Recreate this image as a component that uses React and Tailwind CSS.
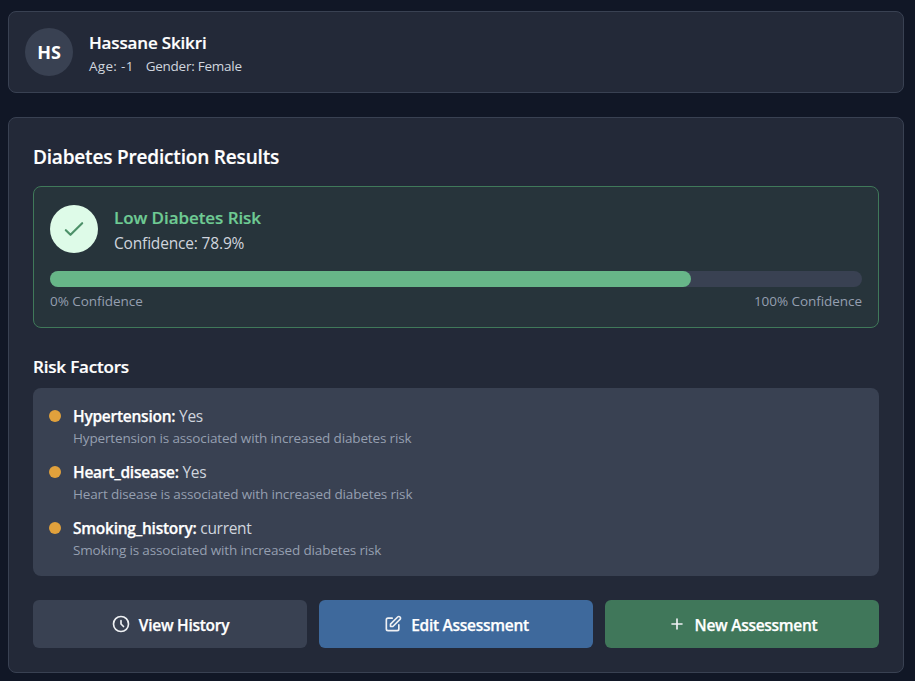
const FACTORS = [
  { name: 'Hypertension', value: 'Yes', note: 'Hypertension is associated with increased diabetes risk' },
  { name: 'Heart_disease', value: 'Yes', note: 'Heart disease is associated with increased diabetes risk' },
  { name: 'Smoking_history', value: 'current', note: 'Smoking is associated with increased diabetes risk' },
];

function Icon({ d, className, strokeWidth = 2 }) {
  return (
    <svg className={className} viewBox="0 0 24 24" fill="none" stroke="currentColor" strokeWidth={strokeWidth} strokeLinecap="round" strokeLinejoin="round">
      <path d={d} />
    </svg>
  );
}

function Action({ color, d, children }) {
  return (
    <button className={`flex h-12 flex-1 items-center justify-center gap-2 rounded-md text-[15.5px] font-semibold tracking-[-0.28px] text-white ${color}`}>
      <Icon className="size-5 text-[#eef0f3]" d={d} />
      <span className="pt-0.5 leading-[23px] whitespace-nowrap [-webkit-text-stroke:0.25px]">{children}</span>
    </button>
  );
}

export default function App() {
  return (
    <div className="h-[681px] overflow-hidden bg-[#111726] pt-[11px] pl-2 font-['Open_Sans','Noto_Sans',sans-serif] text-white">
      <div className="flex w-[896px] flex-col gap-6">
        <header className="flex items-center gap-4 rounded-lg border border-[#394152] bg-[#232938] p-4">
          <div className="flex size-12 items-center justify-center rounded-full bg-[#394152] text-lg font-bold">HS</div>
          <div>
            <h1 className="pt-0.5 text-[17px] leading-[26px] font-semibold tracking-[-0.16px] [-webkit-text-stroke:0.2px]">Hassane Skikri</h1>
            <p className="flex gap-3 pt-px text-[13.5px] leading-[19px] text-[#d0d5de]">
              <span className="tracking-[0.3px]">Age: -1</span>
              <span className="tracking-[-0.25px]">Gender: Female</span>
            </p>
          </div>
        </header>

        <main className="rounded-lg border border-[#394152] bg-[#232938] p-6">
          <h2 className="mb-4 pt-0.5 text-[19px] leading-[26px] font-semibold tracking-[-0.18px] [-webkit-text-stroke:0.2px]">Diabetes Prediction Results</h2>

          <section className="mb-6 rounded-lg border border-[#40795a] bg-[#27343b] p-4">
            <div className="mb-4 flex items-center gap-4">
              <div className="flex size-12 items-center justify-center rounded-full bg-[#defbe8] text-[#4d9169]">
                <Icon className="size-7" strokeWidth={1.85} d="M5 13l4 4L19 7" />
              </div>
              <div>
                <h3 className="pt-0.5 text-[17px] leading-[26px] font-semibold tracking-[-0.07px] text-[#6fcb94] [-webkit-text-stroke:0.2px]">Low Diabetes Risk</h3>
                <p className="pt-px text-[15.5px] leading-[23px] tracking-[-0.17px] text-[#d0d5de]">Confidence: 78.9%</p>
              </div>
            </div>
            <div className="h-4 rounded-full bg-[#394152]">
              <div className="h-4 w-[78.9%] rounded-full bg-[#67b688]" />
            </div>
            <div className="mt-1 flex justify-between pt-px text-[13.5px] leading-[19px] tracking-[-0.05px] text-[#959fb0]">
              <span>0% Confidence</span>
              <span>100% Confidence</span>
            </div>
          </section>

          <h3 className="mb-2 pt-0.5 text-[17px] leading-[26px] font-semibold tracking-[-0.18px] [-webkit-text-stroke:0.2px]">Risk Factors</h3>
          <ul className="mb-6 flex flex-col gap-3 rounded-lg bg-[#394152] p-4">
            {FACTORS.map((f) => (
              <li key={f.name} className="flex gap-3">
                <span className="mt-1.5 size-3 shrink-0 rounded-full bg-[#e1a13c]" />
                <div>
                  <p className="pt-px text-[15.5px] leading-[23px] tracking-[-0.3px] text-[#d0d5de]">
                    <span className="font-semibold tracking-[-0.25px] text-white [-webkit-text-stroke:0.25px]">{f.name}:</span> {f.value}
                  </p>
                  <p className="pt-px text-[13.5px] leading-[19px] tracking-[-0.15px] text-[#959fb0]">{f.note}</p>
                </div>
              </li>
            ))}
          </ul>

          <div className="flex gap-3">
            <Action color="bg-[#394152]" d="M12 8v4l3 3m6-3a9 9 0 11-18 0 9 9 0 0118 0z">View History</Action>
            <Action color="bg-[#3e699c]" d="M11 5H6a2 2 0 00-2 2v11a2 2 0 002 2h11a2 2 0 002-2v-5m-1.414-9.414a2 2 0 112.828 2.828L11.828 15H9v-2.828l8.586-8.586z">Edit Assessment</Action>
            <Action color="bg-[#40775a]" d="M12 6v12M6 12h12">New Assessment</Action>
          </div>
        </main>
      </div>
    </div>
  );
}
